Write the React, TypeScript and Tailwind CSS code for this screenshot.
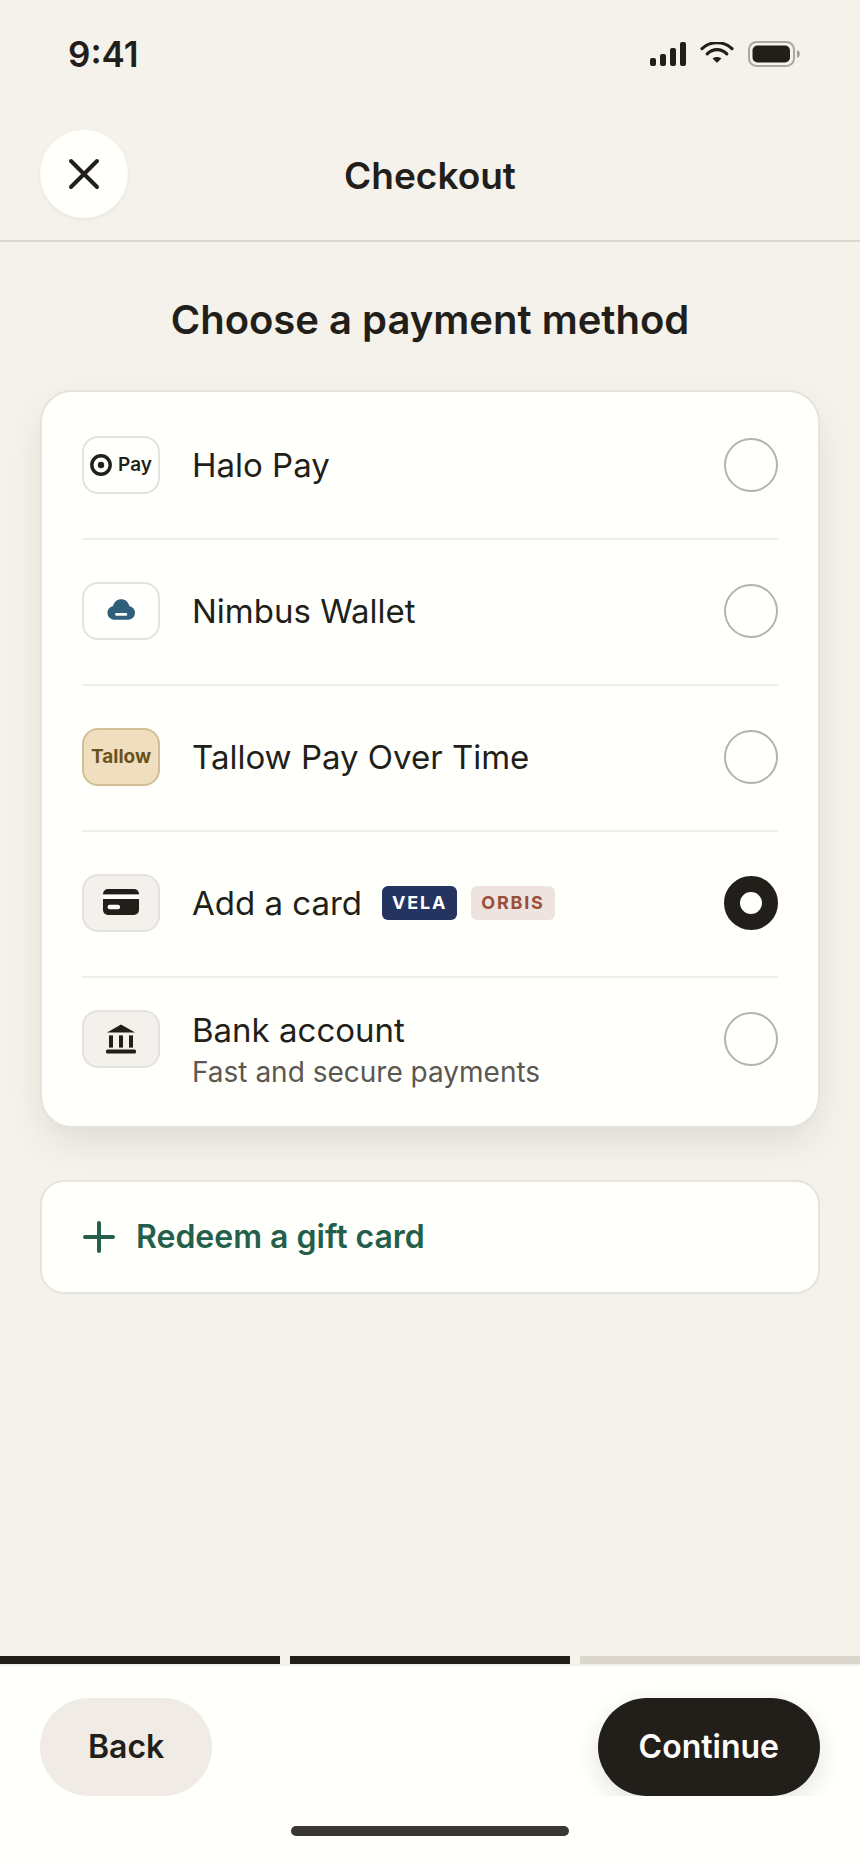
import React, { useState } from 'react';
import clsx from 'clsx';

type MethodId = 'halo' | 'nimbus' | 'tallow' | 'card' | 'bank';

interface Method {
  id: MethodId;
  label: string;
  note?: string;
  tile: string;
  mark: React.ReactNode;
}

const SignalIcon = () => (
  <svg width="36" height="24" viewBox="0 0 36 24" fill="currentColor" aria-hidden="true">
    <rect x="0" y="16" width="6" height="8" rx="2" />
    <rect x="10" y="12" width="6" height="12" rx="2" />
    <rect x="20" y="6" width="6" height="18" rx="2" />
    <rect x="30" y="0" width="6" height="24" rx="2" />
  </svg>
);

const WifiIcon = () => (
  <svg width="34" height="24" viewBox="0 0 34 24" fill="none" aria-hidden="true">
    <path d="M2 6.6C10.5 -1.2 23.5 -1.2 32 6.6" stroke="currentColor" strokeWidth="3.2" strokeLinecap="round" />
    <path d="M7.2 11.8C12.8 6.2 21.2 6.2 26.8 11.8" stroke="currentColor" strokeWidth="3.2" strokeLinecap="round" />
    <path d="M12.6 16.6C15 14.6 19 14.6 21.4 16.6L17.7 20.3C17.3 20.8 16.7 20.8 16.3 20.3Z" fill="currentColor" />
  </svg>
);

const BatteryIcon = () => (
  <svg width="52" height="26" viewBox="0 0 52 26" fill="none" aria-hidden="true">
    <rect x="1" y="1" width="45" height="24" rx="7.5" stroke="currentColor" strokeOpacity="0.35" strokeWidth="2" />
    <path d="M49 9C52.8 10.2 52.8 15.8 49 17Z" fill="currentColor" fillOpacity="0.4" />
    <rect x="4.5" y="4.5" width="37.5" height="17" rx="5" fill="currentColor" />
  </svg>
);

const HaloMark = () => (
  <span className="flex items-center gap-1.5 text-[19px] font-semibold text-[#221f1a]">
    <svg width="22" height="22" viewBox="0 0 22 22" fill="none" aria-hidden="true">
      <circle cx="11" cy="11" r="9.2" stroke="currentColor" strokeWidth="3.4" />
      <circle cx="11" cy="11" r="3.2" fill="currentColor" />
    </svg>
    Pay
  </span>
);

const NimbusMark = () => (
  <svg width="30" height="24" viewBox="0 0 30 24" fill="none" aria-hidden="true">
    <path
      d="M7.6 20.8A7 7 0 0 1 7 7C8.2 2.8 11.2 0.2 15.2 0.2S22.2 2.8 23.4 7A7 7 0 0 1 22.8 20.8Z"
      fill="#2f5f7a"
    />
    <rect x="9.2" y="14" width="12" height="2.7" rx="1.3" fill="#fff" />
  </svg>
);

const CardMark = () => (
  <svg width="36" height="28" viewBox="0 0 36 28" fill="none" aria-hidden="true">
    <rect x="0" y="0" width="36" height="26" rx="5" fill="#221f1a" />
    <rect x="0" y="5.4" width="36" height="4.6" fill="#fffffb" />
    <rect x="4.6" y="15.8" width="12.4" height="4.4" rx="2" fill="#fffffb" />
  </svg>
);

const BankMark = () => (
  <svg width="30" height="30" viewBox="0 0 30 30" fill="#221f1a" aria-hidden="true">
    <path d="M15 0.4L29 8.4H1Z" />
    <rect x="3" y="11.4" width="4" height="12.2" />
    <rect x="13" y="11.4" width="4" height="12.2" />
    <rect x="23" y="11.4" width="4" height="12.2" />
    <rect x="0" y="25.4" width="30" height="4" rx="1.5" />
  </svg>
);

const METHODS: Method[] = [
  { id: 'halo', label: 'Halo Pay', tile: 'border-[#e4e2de] bg-[#fffffd]', mark: <HaloMark /> },
  { id: 'nimbus', label: 'Nimbus Wallet', tile: 'border-[#e4e2de] bg-[#fffffd]', mark: <NimbusMark /> },
  {
    id: 'tallow',
    label: 'Tallow Pay Over Time',
    tile: 'border-[#d2bf95] bg-[#efdfbf]',
    mark: <span className="text-[19px] font-bold text-[#6b521d]">Tallow</span>,
  },
  { id: 'card', label: 'Add a card', tile: 'border-[#e4e2de] bg-[#f4f1ec]', mark: <CardMark /> },
  {
    id: 'bank',
    label: 'Bank account',
    note: 'Fast and secure payments',
    tile: 'border-[#e4e2de] bg-[#f4f1ec]',
    mark: <BankMark />,
  },
];

const CardBrands = () => (
  <span className="ml-5 flex gap-3.5 text-lg font-bold tracking-widest">
    <span className="flex h-[34px] items-center rounded-md bg-[#24335f] px-2.5 text-white">VELA</span>
    <span className="flex h-[34px] items-center rounded-md bg-[#eee3df] px-2.5 text-[#9a4f3a]">ORBIS</span>
  </span>
);

const STEPS = 3;
const CURRENT_STEP = 2;

export default function App() {
  const [selected, setSelected] = useState<MethodId>('card');

  return (
    <div className="flex min-h-screen flex-col bg-[#f5f2eb] font-['Inter',sans-serif] text-[#221f1a]">
      {/* Status bar */}
      <div className="flex h-[108px] items-center justify-between pr-[60px] pl-[68px]">
        <span className="text-[35px] leading-10 font-semibold">9:41</span>
        <div className="flex items-center gap-3.5">
          <SignalIcon />
          <WifiIcon />
          <BatteryIcon />
        </div>
      </div>

      {/* Header */}
      <header className="grid grid-cols-[88px_1fr_88px] items-center border-b-2 border-[#dbd8d0] px-10 py-[22px]">
        <button
          type="button"
          aria-label="Close"
          className="flex size-[88px] items-center justify-center rounded-full bg-[#fffffb] shadow-[0_2px_4px_rgba(34,31,26,0.05)]"
        >
          <svg width="32" height="32" viewBox="0 0 32 32" fill="none" aria-hidden="true">
            <path d="M3 3L29 29M29 3L3 29" stroke="currentColor" strokeWidth="4" strokeLinecap="round" />
          </svg>
        </button>
        <h1 className="pt-1 text-center text-[37px] leading-12 font-semibold">Checkout</h1>
      </header>

      <main className="flex-1 px-10 pt-[50px] pb-10">
        <h2 id="method-heading" className="mb-[42px] text-center text-[40px] leading-14 font-semibold">
          Choose a payment method
        </h2>

        <div
          role="radiogroup"
          aria-labelledby="method-heading"
          className="rounded-[32px] border-2 border-[#e4e3dd] bg-[#fffffb] px-10 shadow-[0_16px_40px_-8px_rgba(34,31,26,0.13)]"
        >
          {METHODS.map((method, idx) => (
            <label
              key={method.id}
              className={clsx(
                'flex cursor-pointer',
                idx === 0 && 'h-[148px] items-center',
                idx > 0 && !method.note && 'h-[146px] items-center pb-0.5',
                method.note && 'items-start pt-8 pb-[34px]',
                idx < METHODS.length - 1 && 'border-b-2 border-[#efeeea]'
              )}
            >
              <span
                className={clsx(
                  'flex h-[58px] w-[78px] shrink-0 items-center justify-center rounded-2xl border-2',
                  method.tile
                )}
              >
                {method.mark}
              </span>
              <span className="ml-8 flex flex-1 flex-col gap-0.5">
                <span className="flex items-center text-[33px] leading-10">
                  {method.label}
                  {method.id === 'card' && <CardBrands />}
                </span>
                {method.note && <span className="text-[28px] leading-10 text-[#5b5751]">{method.note}</span>}
              </span>
              <input
                type="radio"
                name="payment-method"
                value={method.id}
                checked={selected === method.id}
                onChange={() => setSelected(method.id)}
                className={clsx(
                  'size-[54px] shrink-0 appearance-none rounded-full border-2 border-[#b5b3af] checked:border-[16px] checked:border-[#221f1a]',
                  method.note && 'mt-0.5'
                )}
              />
            </label>
          ))}
        </div>

        <button
          type="button"
          className="mt-[52px] flex h-[114px] w-full items-center gap-5 rounded-3xl border-2 border-[#e4e3dd] bg-[#fffffb] px-10 text-[32px] leading-10 font-semibold text-[#235f4a]"
        >
          <svg width="34" height="34" viewBox="0 0 34 34" fill="none" aria-hidden="true">
            <path d="M17 3V31M3 17H31" stroke="currentColor" strokeWidth="4" strokeLinecap="round" />
          </svg>
          Redeem a gift card
        </button>
      </main>

      {/* Progress */}
      <div className="flex gap-2.5">
        {Array.from({ length: STEPS }, (_, i) => (
          <div key={i} className={clsx('h-2 flex-1', i < CURRENT_STEP ? 'bg-[#221f1a]' : 'bg-[#dbd7cd]')} />
        ))}
      </div>

      <footer className="border-t-2 border-[#f2f0ea] bg-[#fffffb]">
        <div className="flex justify-between overflow-hidden px-10 pt-8 text-[32px] leading-10 font-semibold">
          <button type="button" className="h-[98px] rounded-full bg-[#f0ebe5] px-12">
            Back
          </button>
          <button
            type="button"
            className="h-[98px] rounded-full bg-[#221f1a] px-[41px] text-[#fffdfa] shadow-[0_8px_24px_rgba(34,31,26,0.12)]"
          >
            Continue
          </button>
        </div>
        <div className="flex h-[68px] justify-center pt-[30px]">
          <div className="h-2.5 w-[278px] rounded-full bg-[#3a3732]" />
        </div>
      </footer>
    </div>
  );
}
